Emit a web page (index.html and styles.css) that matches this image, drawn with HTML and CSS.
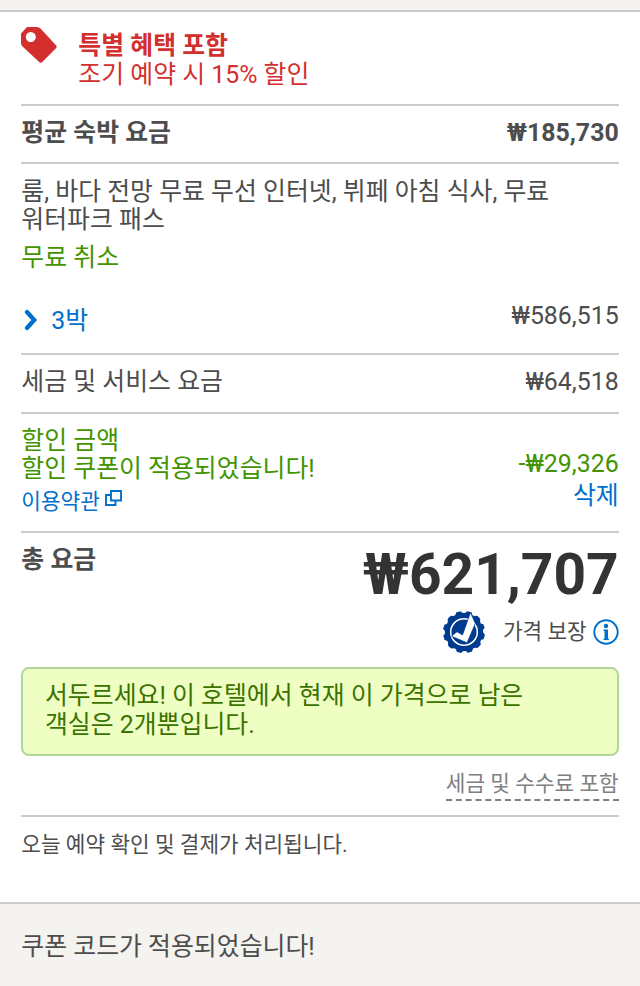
FILE: index.html
```html
<!DOCTYPE html>
<html lang="ko">
<head>
<meta charset="utf-8">
<title>요금 상세</title>
<link rel="stylesheet" href="styles.css">
</head>
<body>
<main class="summary">
  <section class="deal">
    <svg class="tag" width="36" height="36" viewBox="0 0 36 36"><path fill="#d32f2f" fill-rule="evenodd" d="M6 0H16Q18 0 19.500 1.500L35.200 18.500Q36.200 19.700 35.200 20.900L21 35.200Q19.800 36.200 18.500 35.200L1.500 19.500Q0 18 0 16V6.500ZM9.800 5.100a5 5 0 1 0 .01 0Z"/></svg>
    <div><strong>특별 혜택 포함</strong><br>조기 예약 시 15% 할인</div>
  </section>
  <section class="row average"><strong>평균 숙박 요금</strong><strong>₩185,730</strong></section>
  <section class="room">
    <p>룸, 바다 전망 무료 무선 인터넷, 뷔페 아침 식사, 무료<br>워터파크 패스</p>
    <p class="free">무료 취소</p>
    <div class="row nights">
      <a class="toggle"><svg width="14" height="22" viewBox="0 0 14 22"><path fill="none" stroke="#0070cc" stroke-width="4.300" stroke-linecap="round" d="M3 3L10.200 11L3 19"/></svg>3박</a>
      <span>₩586,515</span>
    </div>
  </section>
  <section class="row taxes"><span>세금 및 서비스 요금</span><span>₩64,518</span></section>
  <section class="row discount">
    <div>할인 금액<br>할인 쿠폰이 적용되었습니다!
      <a class="terms">이용약관<svg width="17" height="16" viewBox="0 0 17 16"><path fill="none" stroke="#0070cc" stroke-width="1.900" d="M6 1H16V10.500H6ZM6 5H1V15H10.500V10.500"/></svg></a>
    </div>
    <div class="minus">-₩29,326<a>삭제</a></div>
  </section>
  <section class="total">
    <div class="row"><strong>총 요금</strong><strong class="sum">₩621,707</strong></div>
    <div class="guarantee">
      <svg class="seal" width="42" height="42" viewBox="-21 -21 42 42">
        <circle r="21" fill="#003b8e"/>
        <circle class="bites" r="22.300" fill="none" stroke="#fff" stroke-width="6.600" stroke-linecap="round" stroke-dasharray="0 11.676"/>
        <circle r="13.300" fill="none" stroke="#fff" stroke-width="1.500"/>
        <path fill="#fff" stroke="#003b8e" stroke-width=".7" d="M-12.500 4.200L-7-.3L-1.500 3L6.500-19.500L11.300-8.500L3 10.800Z"/>
      </svg>
      <span>가격 보장</span>
      <svg width="26" height="26" viewBox="0 0 26 26"><circle cx="13" cy="13" r="11.700" fill="none" stroke="#0070cc" stroke-width="1.900"/><circle cx="13" cy="7" r="2.200" fill="#0070cc"/><path fill="#0070cc" d="M10.500 10.500H15V19.700H16V21H10.500V19.700H11.500V12H10.500Z"/></svg>
    </div>
    <p class="hurry">서두르세요! 이 호텔에서 현재 이 가격으로 남은<br>객실은 2개뿐입니다.</p>
    <div class="included"><span>세금 및 수수료 포함</span></div>
  </section>
  <section class="today">오늘 예약 확인 및 결제가 처리됩니다.</section>
</main>
<footer>쿠폰 코드가 적용되었습니다!</footer>
</body>
</html>
```
FILE: styles.css
```css
* { box-sizing: border-box; }
body {
  margin: 0;
  height: 986px;
  padding-top: 10px;
  display: flex;
  flex-direction: column;
  overflow: hidden;
  background: #f4f3ef;
  color: #4d4d4d;
  font: 24.89px/28.44px Roboto, "Noto Sans CJK KR", sans-serif;
}
p { margin: 0; }
a { color: #0070cc; }
svg { display: block; flex: none; }
.summary {
  height: 892px;
  padding: 0 21.33px;
  background: #fff;
  border-top: 2px solid #ccc;
}
section + section { border-top: 2px solid #ccc; }
.row { display: flex; justify-content: space-between; }
.deal {
  display: flex;
  gap: 21px;
  height: 92px;
  padding-top: 20.300px;
  color: #d32f2f;
}
.tag { margin-top: -5.300px; }
.average { height: 58px; padding-top: 13px; }
.room { height: 191px; padding-top: 14px; }
.free { margin-top: 9px; color: #429400; }
.nights { margin-top: 30px; }
.toggle { display: flex; gap: 13px; margin: 4.500px 0 0 3px; }
.toggle svg { margin-top: 2px; }
.taxes { height: 59px; padding-top: 13px; }
.discount { height: 119px; padding-top: 12.500px; color: #429400; }
.terms {
  display: flex;
  gap: 5px;
  margin-top: 5px;
  font-size: 21.33px;
}
.terms svg { margin-top: 2px; }
.minus { padding-top: 23px; text-align: right; }
.minus a { display: block; margin-top: 4px; }
.total { height: 284px; padding-top: 13px; }
.sum {
  margin-top: 1px;
  font-size: 56.89px;
  line-height: 56.89px;
  color: #333;
}
.guarantee {
  display: flex;
  justify-content: flex-end;
  align-items: center;
  height: 42px;
  margin-top: 7.100px;
  font-size: 21.33px;
}
.seal { margin-right: 18px; }
.bites { transform: rotate(-2deg); }
.guarantee span { margin-right: 6px; }
.hurry {
  height: 89px;
  margin-top: 14px;
  padding: 13.300px 21.670px;
  border: 2px solid #b2d59a;
  border-radius: 8px;
  background: #efffc4;
  color: #3c7300;
}
.included {
  display: flex;
  justify-content: flex-end;
  margin-top: 14px;
  font-size: 21.33px;
  color: #808080;
}
.included span { height: 31px; border-bottom: 2px dashed #808080; }
.today { padding-top: 14px; font-size: 21.33px; }
footer {
  flex: 1;
  padding: 28.500px 21.33px 0;
  border-top: 2px solid #ccc;
}
```
